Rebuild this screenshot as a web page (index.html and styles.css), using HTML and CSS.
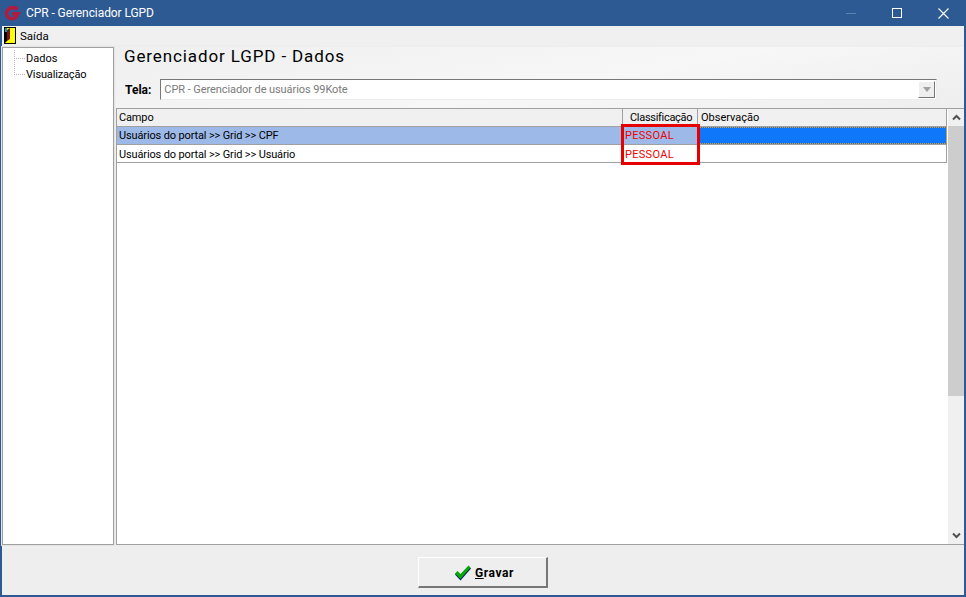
FILE: index.html
```html
<!DOCTYPE html>
<html lang="en">
<head>
    <meta charset="UTF-8">
    <meta name="viewport" content="width=device-width, initial-scale=1.0">
    <title>CPR - Gerenciador LGPD</title>
    <link rel="stylesheet" href="styles.css">
</head>
<body>
    <div class="window">
        <!-- Title bar -->
        <div class="titlebar">
            <svg class="app-logo" width="18" height="18" viewBox="0 0 18 18">
                <path d="M14.500 5.500C12 2.800 7 3 4.800 5.800C2.800 8.500 3.500 12.500 6.500 14C9 15.200 12 14.500 13.500 12.500L14.800 9.800H9" fill="none" stroke="#b01c40" stroke-width="3.600"/>
            </svg>
            <span class="title-text">CPR - Gerenciador LGPD</span>
            <div class="win-buttons">
                <div class="win-btn"><div class="win-min"></div></div>
                <div class="win-btn"><div class="win-max"></div></div>
                <div class="win-btn">
                    <svg width="11" height="11" viewBox="0 0 11 11"><path d="M0.500 0.500L10.500 10.500M10.500 0.500L0.500 10.500" stroke="#fff" stroke-width="1.100" fill="none"/></svg>
                </div>
            </div>
        </div>

        <!-- Menu -->
        <div class="menubar">
            <svg width="12" height="17" viewBox="0 0 12 17">
                <rect width="12" height="17" fill="#000"/>
                <rect x="1" y="1" width="10" height="15" fill="#ffff00"/>
                <path d="M1 1H3V14L1 16Z" fill="#000"/>
                <rect x="1" y="1" width="2" height="4" fill="#00a8b0"/>
                <path d="M3 3L6 1V12L3 14Z" fill="#7a1414"/>
            </svg>
            <span class="menu-item">Saída</span>
        </div>

        <div class="content">
            <!-- Left tree -->
            <div class="tree">
                <div class="tree-row"><span class="tree-line"></span><span class="tree-dados">Dados</span></div>
                <div class="tree-row"><span class="tree-line"></span><span class="tree-vis">Visualização</span></div>
            </div>

            <div class="main">
                <div class="header">
                    <h1>Gerenciador LGPD - Dados</h1>
                    <div class="screen-row">
                        <label>Tela:</label>
                        <div class="combo">
                            <span>CPR - Gerenciador de usuários 99Kote</span>
                            <div class="combo-btn"><div class="combo-arrow"></div></div>
                        </div>
                    </div>
                </div>

                <div class="grid-box">
                    <div class="grid">
                        <div class="grid-row grid-head">
                            <div class="cell col-field">Campo</div>
                            <div class="cell col-class head-center">Classificação</div>
                            <div class="cell col-obs">Observação</div>
                        </div>
                        <div class="grid-row row-selected">
                            <div class="cell col-field">Usuários do portal &gt;&gt; Grid &gt;&gt; CPF</div>
                            <div class="cell col-class red">PESSOAL</div>
                            <div class="cell col-obs obs-focus"></div>
                        </div>
                        <div class="grid-row row-plain">
                            <div class="cell col-field">Usuários do portal &gt;&gt; Grid &gt;&gt; Usuário</div>
                            <div class="cell col-class red">PESSOAL</div>
                            <div class="cell col-obs"></div>
                        </div>
                        <div class="highlight"></div>
                    </div>
                    <div class="scrollbar">
                        <div class="scroll-btn">
                            <svg width="9" height="7" viewBox="0 0 9 7"><path d="M1 5.500L4.500 2L8 5.500" stroke="#505050" stroke-width="2" fill="none"/></svg>
                        </div>
                        <div class="scroll-thumb"></div>
                        <div class="scroll-track"></div>
                        <div class="scroll-btn">
                            <svg width="9" height="7" viewBox="0 0 9 7"><path d="M1 1.500L4.500 5L8 1.500" stroke="#505050" stroke-width="2" fill="none"/></svg>
                        </div>
                    </div>
                </div>
            </div>
        </div>

        <!-- Footer -->
        <div class="footer">
            <button class="save-btn">
                <svg width="18" height="16" viewBox="0 0 18 16">
                    <path d="M1 9.500L3.500 7L6.500 10L14.500 1.500L17 3.500L6.500 15.500Z" fill="#00206a"/>
                    <path d="M1 8.500L3.500 6L6.500 9L14.500 0.500L16.500 2.500L6.500 14Z" fill="#0aa70a"/>
                </svg>
                <span><u>G</u>ravar</span>
            </button>
        </div>
    </div>
</body>
</html>
```

FILE: styles.css
```css
* {
    box-sizing: border-box;
}
html, body {
    margin: 0;
    height: 100%;
}
body {
    font-family: Roboto, "Liberation Sans", Arial, sans-serif;
    font-size: 11px;
    color: #000;
    overflow: hidden;
}
.window {
    display: flex;
    flex-direction: column;
    width: 966px;
    height: 597px;
    background-color: #eeeeee;
    border: 2px solid #2d5a92;
    border-top: 0;
}
.titlebar {
    display: flex;
    align-items: center;
    height: 26px;
    margin: 0 -2px;
    padding-left: 3px;
    background-color: #2d5a92;
    color: #fff;
    flex-shrink: 0;
}
.app-logo {
    margin-right: 5px;
}
.title-text {
    font-size: 12px;
    letter-spacing: -0.08px;
}
.win-buttons {
    display: flex;
    margin-left: auto;
}
.win-btn {
    display: flex;
    align-items: center;
    justify-content: center;
    width: 46px;
    height: 26px;
}
.win-min {
    width: 10px;
    height: 1px;
    background-color: #5d82ad;
}
.win-max {
    width: 10px;
    height: 10px;
    border: 1px solid #fff;
}
.menubar {
    display: flex;
    align-items: center;
    gap: 4px;
    height: 19px;
    padding: 0 0 0 2px;
    background-color: #f0f0f0;
    flex-shrink: 0;
}
.menu-item {
    font-size: 11.5px;
}
.content {
    display: flex;
    height: 500px;
    padding-top: 2px;
    flex-shrink: 0;
}
.tree {
    width: 112px;
    padding-top: 2px;
    background-color: #fff;
    border: 1px solid #a0a0a0;
    outline: 1px solid #e4e4e4;
    flex-shrink: 0;
}
.tree-row {
    display: flex;
    align-items: center;
    height: 16px;
    padding-left: 11px;
}
.tree-line {
    align-self: flex-start;
    width: 11px;
    height: 9px;
    margin-right: 1px;
    border-left: 1px dotted #b4b4b4;
    border-bottom: 1px dotted #b4b4b4;
}
.tree-row + .tree-row .tree-line {
    height: 17px;
    margin-top: -8px;
}
.tree-vis {
    letter-spacing: -0.15px;
}
.main {
    display: flex;
    flex-direction: column;
    flex: 1;
    margin-left: 2px;
    min-width: 0;
}
.header {
    height: 61px;
    padding-left: 8px;
    background: linear-gradient(170deg, #efefef 0%, #f7f7f7 55%, #eeeeee 100%);
    flex-shrink: 0;
}
h1 {
    margin: 0;
    height: 30px;
    font-size: 17px;
    font-weight: normal;
    line-height: 18px;
    letter-spacing: 0.88px;
}
.screen-row {
    display: flex;
    align-items: center;
    gap: 9px;
    height: 25px;
}
.screen-row label {
    font-weight: bold;
    font-size: 12px;
    margin-left: 1px;
}
.combo {
    display: flex;
    align-items: center;
    justify-content: space-between;
    width: 777px;
    height: 21px;
    padding-left: 3px;
    letter-spacing: -0.08px;
    color: #7a7a7a;
    background-color: #fff;
    border: 1px solid #777;
    border-right-color: #ededed;
    border-bottom-color: #ededed;
}
.combo-btn {
    display: flex;
    align-items: center;
    justify-content: center;
    width: 17px;
    height: 17px;
    margin-right: 1px;
    background-color: #efefef;
    border: 1px solid #fff;
    border-right-color: #777;
    border-bottom-color: #777;
}
.combo-arrow {
    border-top: 5px solid #a0a0a0;
    border-left: 4px solid transparent;
    border-right: 4px solid transparent;
}
.grid-box {
    display: flex;
    flex: 1;
    min-height: 0;
    background-color: #fff;
    border: 1px solid #a0a0a0;
    border-width: 1px 0 1px 1px;
}
.grid {
    position: relative;
    flex: 1;
    min-width: 0;
}
.grid-row {
    display: flex;
    height: 18px;
    border-bottom: 1px solid #a0a0a0;
    background-color: #fff;
}
.grid-head {
    background-color: #f0f0f0;
}
.row-plain .cell {
    line-height: 20px;
}
.cell {
    height: 17px;
    padding-left: 2px;
    line-height: 18px;
    white-space: nowrap;
    overflow: hidden;
    border-right: 1px solid #a0a0a0;
    letter-spacing: -0.14px;
}
.col-field {
    width: 506px;
}
.col-class {
    width: 75px;
}
.col-obs {
    flex: 1;
}
.grid-head .col-obs {
    letter-spacing: 0;
    padding-left: 3px;
}
.head-center {
    padding-left: 7px;
    letter-spacing: -0.3px;
}
.red {
    color: #f00000;
    letter-spacing: 0.3px;
}
.row-selected .col-field,
.row-selected .col-class {
    background-color: #9db9e8;
}
.obs-focus {
    background-color: #0f78fa;
    outline: 1px dotted #e89a20;
    outline-offset: -1px;
}
.highlight {
    position: absolute;
    left: 504px;
    top: 15px;
    width: 79px;
    height: 41px;
    border: 3px solid #e60000;
    pointer-events: none;
}
.scrollbar {
    display: flex;
    flex-direction: column;
    width: 16px;
    margin-left: 1px;
    background-color: #f0f0f0;
    flex-shrink: 0;
}
.scroll-btn {
    display: flex;
    align-items: center;
    justify-content: center;
    height: 17px;
    flex-shrink: 0;
}
.scroll-thumb {
    height: 270px;
    background-color: #cdcdcd;
}
.scroll-track {
    flex: 1;
}
.footer {
    display: flex;
    justify-content: center;
    align-items: flex-start;
    flex: 1;
    padding-top: 12px;
}
.save-btn {
    display: flex;
    align-items: center;
    justify-content: center;
    gap: 3px;
    width: 130px;
    height: 31px;
    padding: 1px 0 0 3px;
    background-color: #eeeeee;
    border: 1px solid #fff;
    border-right: 2px solid #777;
    border-bottom: 2px solid #777;
    font-family: inherit;
    font-size: 12px;
    font-weight: bold;
    letter-spacing: 0.6px;
}
```
